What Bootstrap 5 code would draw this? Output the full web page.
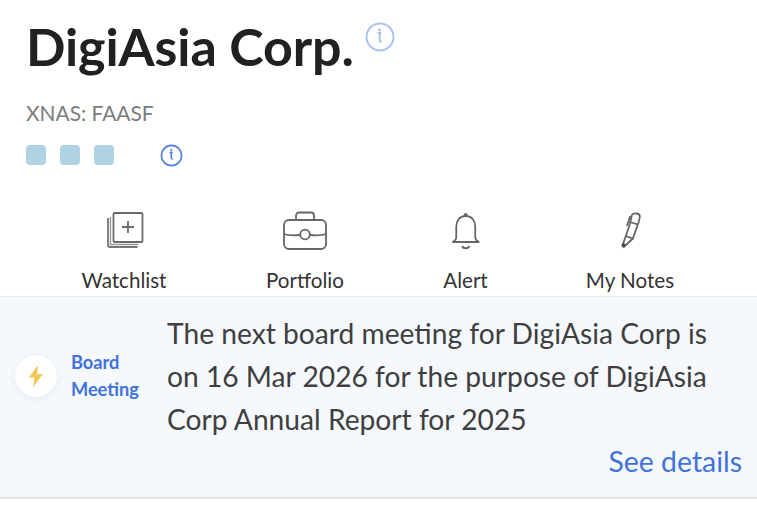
<!DOCTYPE html>
<html lang="en">
<head>
<meta charset="utf-8">
<title>DigiAsia Corp.</title>
<link href="https://cdn.jsdelivr.net/npm/bootstrap@5.3.0/dist/css/bootstrap.min.css" rel="stylesheet">
<style>
html,body{height:518px;overflow:hidden;background:#fff}
body{font-family:Lato,"Liberation Sans",sans-serif;color:#212121}
.head-block{padding:15px 0 0 26px}
.corp-name{font-size:52px;font-weight:700;line-height:62px;margin:0;color:#212121;letter-spacing:-.1px}
.info-big{margin:7px 0 0 11px;flex:none}
.ticker{font-size:20.9px;line-height:24px;color:#7c7c7c;margin-top:24px}
.rate-row{margin-top:18px;height:24px}
.rate-sq{width:20px;height:20px;border-radius:4px;background:#b0d2e2;margin-right:14px;flex:none}
.info-small{margin-left:32px;flex:none}
.act-row{margin-top:44px;height:85px}
.act-item{position:absolute;top:0;transform:translateX(-50%);text-align:center;font-size:20.6px;line-height:24px;color:#333;white-space:nowrap}
.act-wrap{position:relative}
.act-icon{height:43px;display:flex;align-items:flex-start;justify-content:center;margin-bottom:14px}
.notice{background:#f5f8fd;border-top:1px solid #e9edf5;border-bottom:2px solid #e6e6e6;height:203px;padding:15px 15px 0 15px}
.bolt-disc{width:42px;height:42px;border-radius:50%;background:#fff;box-shadow:0 1px 6px rgba(120,130,160,.12);flex:none;margin-top:43px}
.notice-tag{font-size:18.2px;line-height:27px;font-weight:700;color:#3f72dc;width:97px;padding-left:14px;margin-top:37px;flex:none}
.notice-body{font-size:28.2px;line-height:43px;color:#3f3f3f;margin:0;padding-left:13px}
.notice-more{font-size:28.4px;line-height:34px;color:#3f72dc;text-align:right;text-decoration:none;display:block;margin-top:3px}
</style>
</head>
<body>
<div class="head-block">
  <div class="d-flex align-items-start">
    <h1 class="corp-name">DigiAsia Corp.</h1>
    <svg class="info-big" width="30" height="30" viewBox="0 0 30 30" fill="none" stroke="#a9c2ee" stroke-width="2"><circle cx="15" cy="15" r="13.5"/><path d="M12.500 11h2.700c-.8 3-.9 5.500-.5 7.500.2 1 1 1.300 2 .6"/><circle cx="14.500" cy="7.800" r=".6"/></svg>
  </div>
  <div class="ticker">XNAS: FAASF</div>
  <div class="rate-row d-flex align-items-center">
    <span class="rate-sq"></span><span class="rate-sq"></span><span class="rate-sq"></span>
    <svg class="info-small" width="23" height="23" viewBox="0 0 24 24" fill="none" stroke="#4f7fe0" stroke-width="1.700"><circle cx="12" cy="12" r="10.500"/><path d="M10 9h2.200c-.6 2.300-.7 4.200-.4 5.700.2.800.8 1 1.600.5"/><circle cx="11.700" cy="6.500" r=".4"/></svg>
  </div>
</div>
<div class="act-row act-wrap">
  <div class="act-item" style="left:124px">
    <div class="act-icon"><svg width="40" height="40" viewBox="0 0 40 40" fill="none" stroke="#6a6a6a" stroke-width="1.800"><rect x="9" y="2" width="29" height="29" rx="1"/><path d="M23.500 10v12M17.500 16h12"/><path d="M6 6v27.500h28" stroke="#999" stroke-width="1.400"/><path d="M3.500 7v27c0 1.500 1 2 2 2H33" stroke="#777"/></svg></div>
    Watchlist
  </div>
  <div class="act-item" style="left:305px">
    <div class="act-icon"><svg width="46" height="40" viewBox="0 0 46 40" fill="none" stroke="#666" stroke-width="1.800"><rect x="2" y="9" width="42" height="29" rx="5"/><path d="M14 9V5c0-2 1-3.500 3-3.500h12c2 0 3 1.500 3 3.500v4"/><path d="M2 23c4 1.500 11 1.500 16 1M28 24c5 .5 12 .5 16-1"/><circle cx="23" cy="23.500" r="4.800"/></svg></div>
    Portfolio
  </div>
  <div class="act-item" style="left:465.500px">
    <div class="act-icon"><svg width="32" height="40" viewBox="0 0 32 40" fill="none" stroke="#666" stroke-width="1.800"><path d="M16 5c-6.500 0-9.500 5-9.500 11v10c0 2-1 4-4 5h27c-3-1-4-3-4-5V16c0-6-3-11-9.500-11z"/><circle cx="16" cy="4" r="1" fill="#666"/><path d="M12.500 35c.5 3 6.500 3 7 0"/></svg></div>
    Alert
  </div>
  <div class="act-item" style="left:630px">
    <div class="act-icon"><svg width="24" height="40" viewBox="0 0 24 40" fill="none" stroke="#666" stroke-width="1.800"><path d="M14 4c1.500-2.500 8-2 8 1.500 0 1-.5 3-1 5l-6 17-7-2.500 4-12z"/><path d="M8 25l-3.500 10 1.500 1 9-8.500"/><path d="M9 15l3.500-10M12 11l8 2.500"/><path d="M4.500 33l2.500 1.500" stroke="#444" stroke-width="3"/></svg></div>
    My Notes
  </div>
</div>
<div class="notice d-flex">
  <div class="bolt-disc d-flex align-items-center justify-content-center">
    <svg width="18" height="24" viewBox="0 0 18 24"><path d="M11 1L2 13.500h5.500L6 23l10-13h-6z" fill="#f5c556"/></svg>
  </div>
  <div class="notice-tag">Board Meeting</div>
  <div class="flex-grow-1">
    <p class="notice-body">The next board meeting for DigiAsia Corp is on 16 Mar 2026 for the purpose of DigiAsia Corp Annual Report for 2025</p>
    <a class="notice-more" href="#">See details</a>
  </div>
</div>
</body>
</html>
